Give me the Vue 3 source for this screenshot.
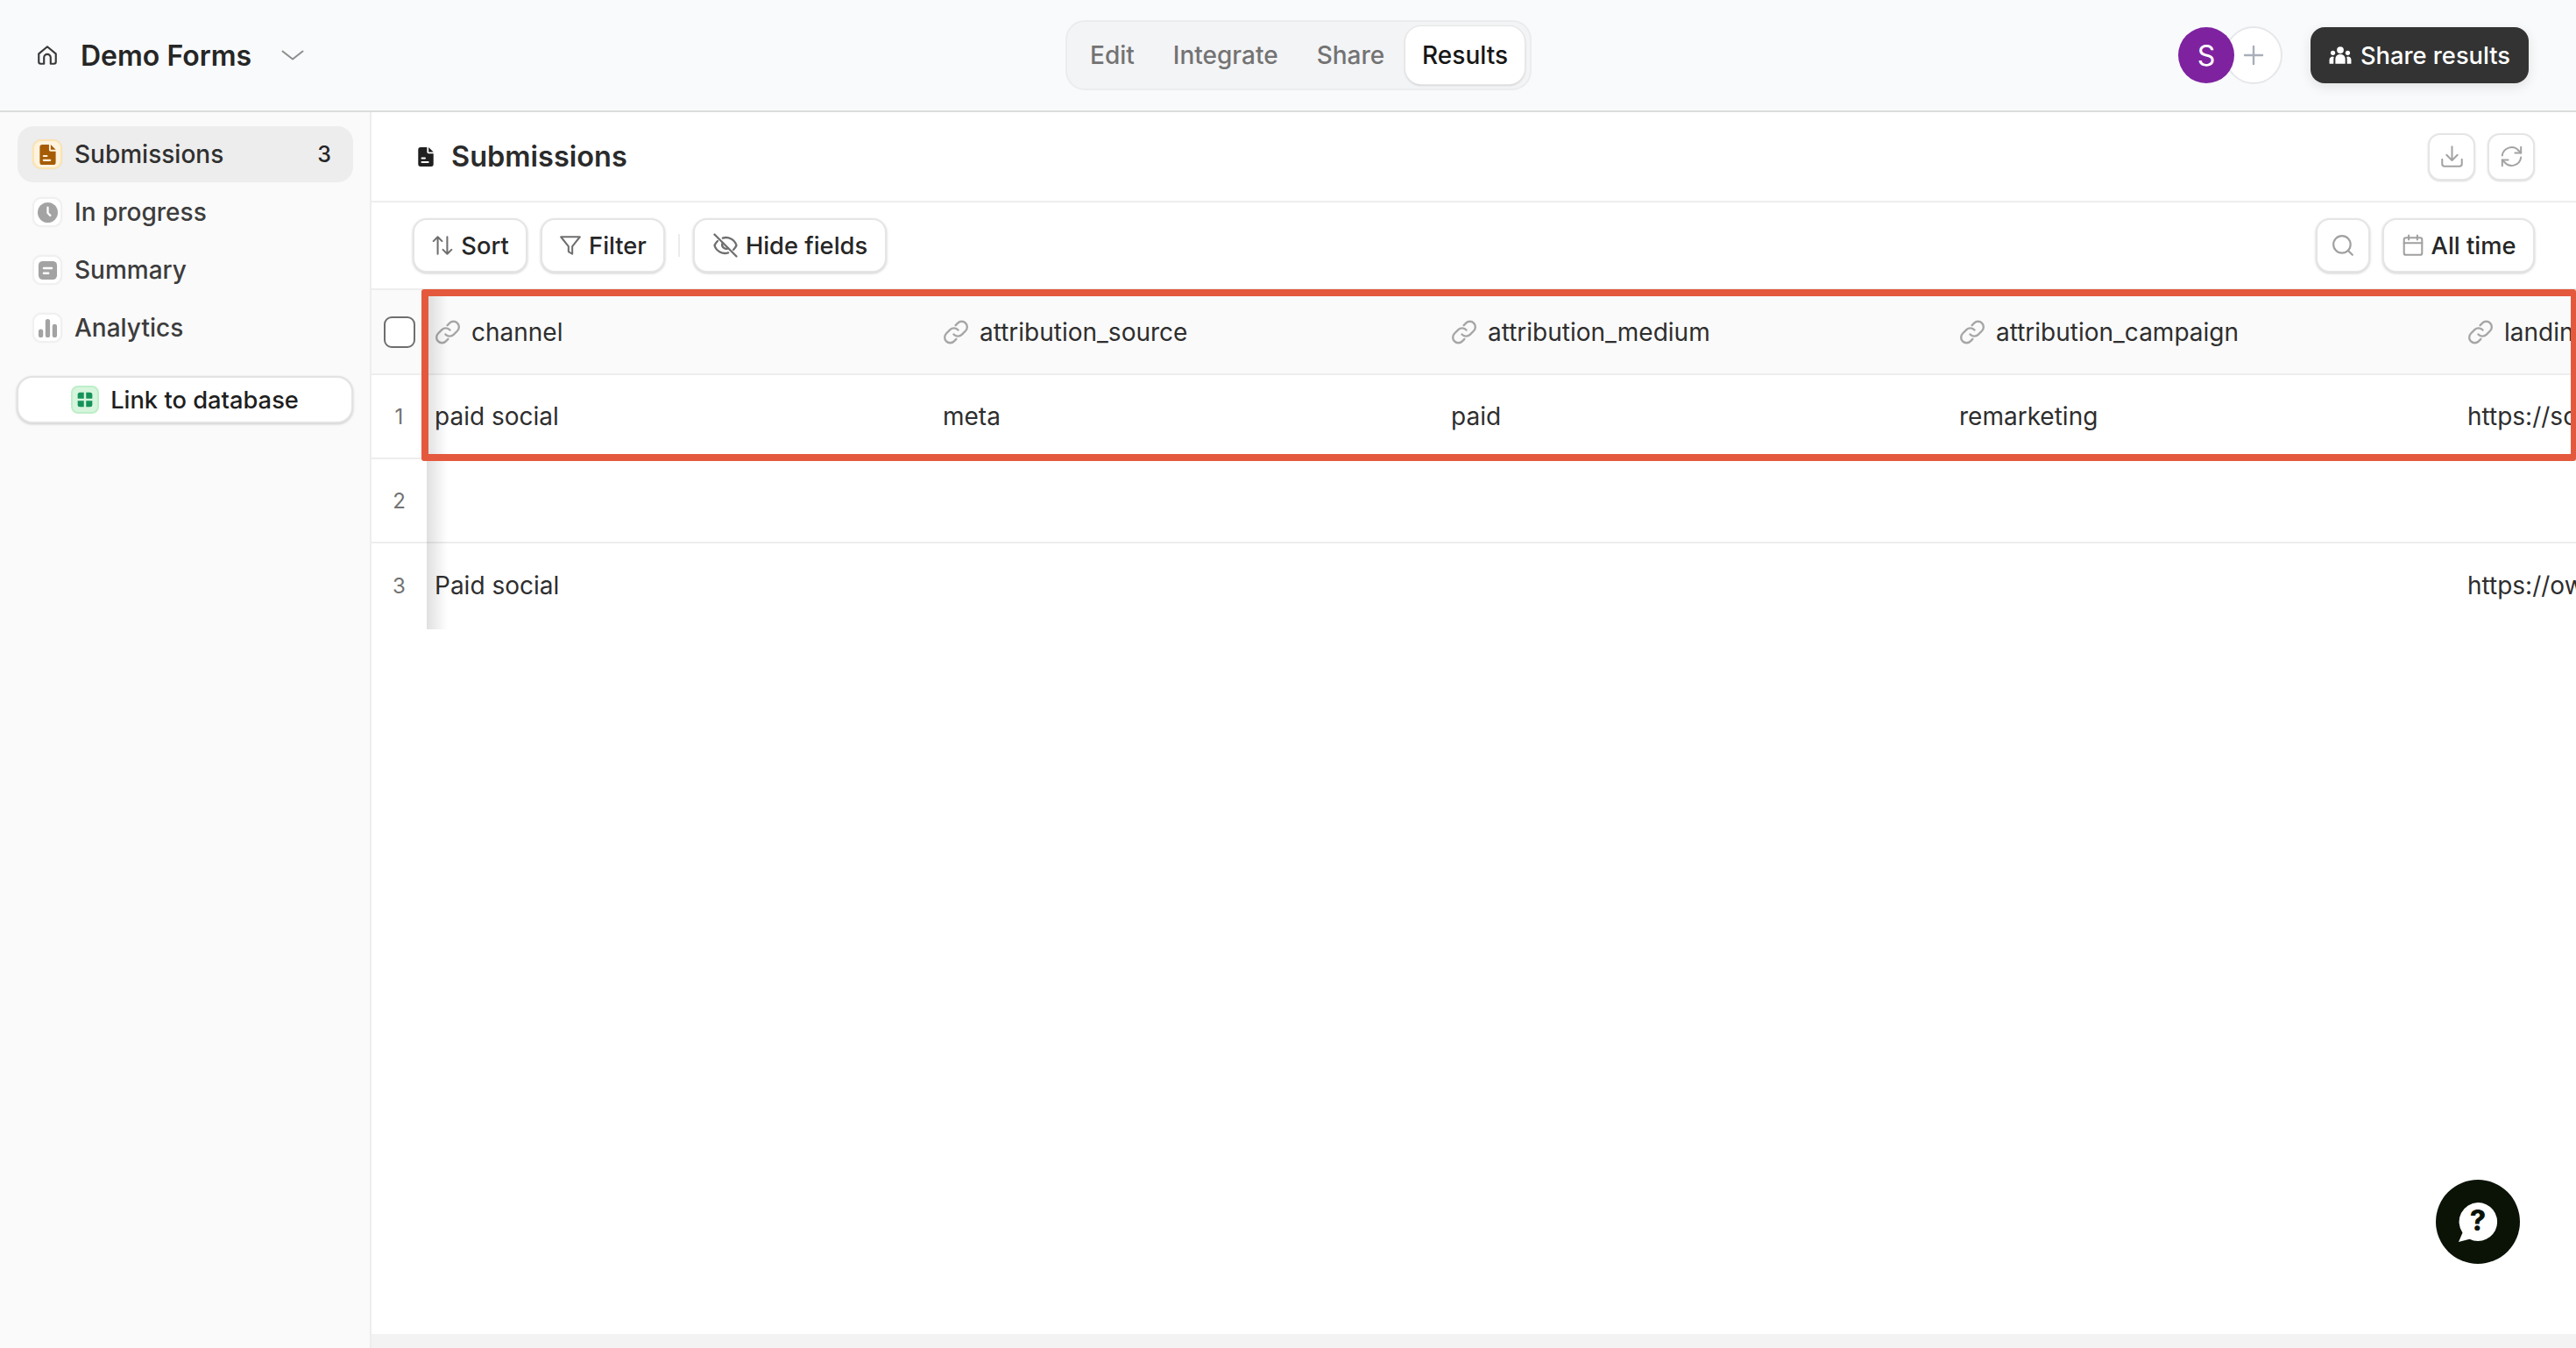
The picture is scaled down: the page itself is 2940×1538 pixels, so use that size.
<script setup>
const navItems = [
  { label: "In progress", icon: "clock" },
  { label: "Summary", icon: "summary" },
  { label: "Analytics", icon: "bars" },
]

const tabs = ["Edit", "Integrate", "Share"]

const columns = ["channel", "attribution_source", "attribution_medium", "attribution_campaign", "landing_page"]

const rows = [
  { id: 1, cells: ["paid social", "meta", "paid", "remarketing", "https://social.example.com/landing"] },
  { id: 2, cells: ["", "", "", "", ""] },
  { id: 3, cells: ["Paid social", "", "", "", "https://owned.example.com/landing"] },
]
</script>

<template>
  <div class="app">
    <header class="topbar">
      <div class="topbar__left">
        <svg class="home" viewBox="0 0 24 24" fill="none" stroke="#3a3a3a" stroke-width="2" stroke-linecap="round" stroke-linejoin="round">
          <path d="M3 10.5 12 3l9 7.5V19a2 2 0 0 1-2 2h-3.5v-6.5a3.5 3.5 0 0 0-7 0V21H5a2 2 0 0 1-2-2z" />
        </svg>
        <span class="form-name">Demo Forms</span>
        <svg class="chevron" viewBox="0 0 26 12" fill="none" stroke="#8d8d8d" stroke-width="2" stroke-linecap="round" stroke-linejoin="round">
          <path d="M1.5 1.5 13 10.5 24.5 1.5" />
        </svg>
      </div>

      <nav class="tabs">
        <span v-for="tab in tabs" :key="tab" class="tabs__item">{{ tab }}</span>
        <span class="tabs__item tabs__item--active">Results</span>
      </nav>

      <div class="topbar__right">
        <div class="avatars">
          <span class="avatar">S</span>
          <span class="avatar-add">
            <svg viewBox="0 0 24 24" fill="none" stroke="#a9aeb9" stroke-width="2.4" stroke-linecap="round">
              <path d="M12 2v20M2 12h20" />
            </svg>
          </span>
        </div>
        <button class="share-btn">
          <svg viewBox="0 0 24 24" fill="#fff">
            <circle cx="12" cy="6.5" r="3.6" />
            <circle cx="4.2" cy="9.5" r="2.4" />
            <circle cx="19.8" cy="9.5" r="2.4" />
            <path d="M6.8 21v-5.2a5.2 5 0 0 1 10.4 0V21z" />
            <path d="M0.5 21v-4.5a3.2 3.2 0 0 1 4.8-2.6 8 8 0 0 0-.4 2.2V21z" />
            <path d="M23.5 21v-4.5a3.2 3.2 0 0 0-4.8-2.6 8 8 0 0 1 .4 2.2V21z" />
          </svg>
          Share results
        </button>
      </div>
    </header>

    <div class="body">
      <aside class="sidebar">
        <div class="nav-item nav-item--active">
          <span class="nav-icon nav-icon--amber">
            <svg viewBox="0 0 24 24" fill="#a65c04">
              <path d="M5.5 0h8v6a2 2 0 0 0 2 2h6v13a3 3 0 0 1-3 3h-13a3 3 0 0 1-3-3V3a3 3 0 0 1 3-3z" />
              <path d="M15.5 0l6 6h-6z" />
              <rect x="6" y="12.5" width="6" height="2.2" rx="1.1" fill="#fdf3df" />
              <rect x="6" y="17.5" width="10" height="2.2" rx="1.1" fill="#fdf3df" />
            </svg>
          </span>
          <span class="nav-item__label">Submissions</span>
          <span class="nav-item__count">3</span>
        </div>

        <div v-for="item in navItems" :key="item.label" class="nav-item">
          <span class="nav-icon">
            <svg v-if="item.icon === 'clock'" viewBox="0 0 24 24">
              <circle cx="12" cy="12" r="12" fill="#a3a3a3" />
              <path d="M12 6v6.5l3 3" fill="none" stroke="#fff" stroke-width="2.4" stroke-linecap="round" stroke-linejoin="round" />
            </svg>
            <svg v-else-if="item.icon === 'summary'" viewBox="0 0 24 24">
              <rect x="1" y="1" width="22" height="22" rx="5" fill="#a3a3a3" />
              <rect x="6" y="8" width="12" height="2.6" rx="1.3" fill="#fff" />
              <rect x="6" y="14" width="8" height="2.6" rx="1.3" fill="#fff" />
            </svg>
            <svg v-else viewBox="0 0 24 24" fill="#a3a3a3">
              <rect x="1" y="13" width="5.5" height="10" rx="2.7" />
              <rect x="9.2" y="1" width="5.5" height="22" rx="2.7" />
              <rect x="17.5" y="7" width="5.5" height="16" rx="2.7" />
            </svg>
          </span>
          <span class="nav-item__label">{{ item.label }}</span>
        </div>

        <button class="link-db">
          <span class="link-db__icon">
            <svg viewBox="0 0 24 24" fill="#15925a">
              <path d="M5 2h5.5v8.5H2V5a3 3 0 0 1 3-3z" />
              <path d="M13.5 2H19a3 3 0 0 1 3 3v5.5h-8.5z" />
              <path d="M2 13.5h8.5V22H5a3 3 0 0 1-3-3z" />
              <path d="M13.5 13.5H22V19a3 3 0 0 1-3 3h-5.5z" />
            </svg>
          </span>
          Link to database
        </button>
      </aside>

      <main class="content">
        <div class="title-row">
          <div class="title">
            <svg viewBox="0 0 24 24" fill="#1f1f1f">
              <path d="M5.5 0h8v6a2 2 0 0 0 2 2h6v13a3 3 0 0 1-3 3h-13a3 3 0 0 1-3-3V3a3 3 0 0 1 3-3z" />
              <path d="M15.5 0l6 6h-6z" />
              <rect x="6" y="12.5" width="6" height="2.2" rx="1.1" fill="#fff" />
              <rect x="6" y="17.5" width="10" height="2.2" rx="1.1" fill="#fff" />
            </svg>
            Submissions
          </div>
          <div class="title-actions">
            <button class="icon-btn">
              <svg viewBox="0 0 24 24" fill="none" stroke="#a3a3a3" stroke-width="1.8" stroke-linecap="round" stroke-linejoin="round">
                <path d="M12 2v14M6.5 10.5 12 16l5.500-5.500" />
                <path d="M2 15v4.500A2.500 2.500 0 0 0 4.500 22h15a2.500 2.500 0 0 0 2.500-2.500V15" />
              </svg>
            </button>
            <button class="icon-btn">
              <svg viewBox="0 0 24 24" fill="none" stroke="#a3a3a3" stroke-width="1.8" stroke-linecap="round" stroke-linejoin="round">
                <path d="M2.500 11A9.500 9.500 0 0 1 19 6l2.500 2.500" />
                <path d="M21.500 2.500v6h-6" />
                <path d="M21.500 13A9.500 9.500 0 0 1 5 18l-2.500-2.500" />
                <path d="M2.500 21.500v-6h6" />
              </svg>
            </button>
          </div>
        </div>

        <div class="toolbar">
          <button class="tool-btn tool-btn--sort">
            <svg viewBox="0 0 24 24" fill="none" stroke="#6f6f6f" stroke-width="1.9" stroke-linecap="round" stroke-linejoin="round">
              <path d="M7 21V3M2.500 7.500 7 3l4.500 4.500" />
              <path d="M17 3v18M12.500 16.500 17 21l4.500-4.500" />
            </svg>
            Sort
          </button>
          <button class="tool-btn tool-btn--filter">
            <svg viewBox="0 0 24 24" fill="none" stroke="#6f6f6f" stroke-width="1.9" stroke-linecap="round" stroke-linejoin="round">
              <path d="M2 3h20l-8 10v8l-4-2.500V13z" />
            </svg>
            Filter
          </button>
          <span class="toolbar__sep"></span>
          <button class="tool-btn tool-btn--hide">
            <svg viewBox="0 0 24 24" fill="none" stroke="#6f6f6f" stroke-width="1.9" stroke-linecap="round" stroke-linejoin="round">
              <path d="M2 2l20 20" />
              <path d="M9.500 5.300A10 10 0 0 1 22 12a13 13 0 0 1-2.800 4M14.500 18.700A10 10 0 0 1 2 12a13 13 0 0 1 2.800-4" />
              <path d="M9.500 9.700a3.500 3.500 0 0 0 4.800 4.800" />
            </svg>
            Hide fields
          </button>
          <button class="tool-btn tool-btn--search">
            <svg viewBox="0 0 24 24" fill="none" stroke="#a0a0a0" stroke-width="2" stroke-linecap="round">
              <circle cx="11" cy="11" r="9" />
              <path d="M18 18l4 4" />
            </svg>
          </button>
          <button class="tool-btn tool-btn--time">
            <svg viewBox="0 0 24 24" fill="none" stroke="#a0a0a0" stroke-width="1.9" stroke-linecap="round" stroke-linejoin="round">
              <rect x="2.500" y="4" width="19" height="18" rx="2" />
              <path d="M2.500 9.500h19M7.500 1.500V6M16.500 1.500V6" />
            </svg>
            All time
          </button>
        </div>

        <div class="table">
          <div class="table__row table__row--head">
            <div class="table__index">
              <span class="checkbox"></span>
            </div>
            <div v-for="col in columns" :key="col" class="table__cell">
              <svg class="link-icon" viewBox="0 0 24 24" fill="none" stroke="#a6a6a6" stroke-width="1.9" stroke-linecap="round" stroke-linejoin="round">
                <path d="M10 14a5 5 0 0 0 7.300.3l3.500-3.500a5 5 0 0 0-7.100-7.100l-2 2" />
                <path d="M14 10a5 5 0 0 0-7.300-.3l-3.500 3.500a5 5 0 0 0 7.100 7.100l2-2" />
              </svg>
              {{ col }}
            </div>
          </div>
          <div v-for="row in rows" :key="row.id" class="table__row">
            <div class="table__index">{{ row.id }}</div>
            <div v-for="(cell, i) in row.cells" :key="i" class="table__cell">{{ cell }}</div>
          </div>
        </div>

        <div class="scroll-strip"></div>
      </main>
    </div>

    <!-- annotation box drawn over the table -->
    <div class="highlight"></div>

    <button class="help">
      <svg viewBox="0 0 48 48">
        <path d="M24 2a22 22 0 1 1-9.500 41.800L2 47l4.500-10.500A22 22 0 0 1 24 2z" fill="#fff" />
        <text x="24" y="34" text-anchor="middle" class="help__mark">?</text>
      </svg>
    </button>
  </div>
</template>

<style scoped>
.app {
  position: relative;
  display: flex;
  flex-direction: column;
  width: 2940px;
  height: 1538px;
  overflow: hidden;
  font-family: Inter, "Liberation Sans", sans-serif;
  color: #262626;
  background: #fff;
}

button {
  font-family: inherit;
  cursor: pointer;
}

.topbar {
  display: flex;
  align-items: center;
  flex: 0 0 128px;
  box-sizing: border-box;
  padding-right: 54px;
  background: #f9fafb;
  border-bottom: 2px solid #dcdcdc;
}

.topbar__left {
  display: flex;
  align-items: center;
  flex: 0 0 1216px;
  box-sizing: border-box;
  padding-left: 41px;
}

.home {
  width: 26px;
  height: 26px;
}

.form-name {
  margin-left: 25px;
  font-size: 32px;
  font-weight: 600;
  color: #262626;
}

.chevron {
  width: 26px;
  height: 12px;
  margin-left: 34px;
}

.tabs {
  display: flex;
  align-items: center;
  box-sizing: border-box;
  width: 532px;
  height: 80px;
  padding: 0 6px 0 26px;
  background: #f3f4f6;
  border: 2px solid #ebecee;
  border-radius: 22px;
}

.tabs__item {
  margin-right: 44px;
  font-size: 28px;
  font-weight: 500;
  color: #737373;
}

.tabs__item--active {
  display: flex;
  align-items: center;
  justify-content: center;
  width: 138px;
  height: 66px;
  margin-left: -20px;
  margin-right: 0;
  background: #fff;
  border-radius: 18px;
  color: #171717;
  box-shadow: 0 0 0 1px #e5e5e5, 0 1px 3px rgba(0, 0, 0, 0.25);
}

.topbar__right {
  display: flex;
  align-items: center;
  margin-left: auto;
}

.avatars {
  display: flex;
  align-items: center;
}

.avatar {
  position: relative;
  z-index: 1;
  display: flex;
  align-items: center;
  justify-content: center;
  width: 64px;
  height: 64px;
  border-radius: 50%;
  background: #7e22a0;
  color: #fff;
  font-size: 32px;
}

.avatar-add {
  display: flex;
  align-items: center;
  justify-content: center;
  box-sizing: border-box;
  width: 66px;
  height: 66px;
  margin-left: -11px;
  border: 2px solid #e6e7eb;
  border-radius: 50%;
  background: #fff;
}

.avatar-add svg {
  width: 24px;
  height: 24px;
}

.share-btn {
  display: flex;
  align-items: center;
  gap: 10px;
  justify-content: center;
  width: 249px;
  height: 64px;
  margin-left: 32px;
  border: 0;
  border-radius: 16px;
  background: #333;
  color: #fff;
  font-size: 27.3px;
  font-weight: 500;
  box-shadow: 0 4px 14px rgba(0, 0, 0, 0.1);
}

.share-btn svg {
  width: 26px;
  height: 26px;
}

.body {
  display: flex;
  flex: 1;
  min-height: 0;
}

.sidebar {
  display: flex;
  flex-direction: column;
  flex: 0 0 424px;
  box-sizing: border-box;
  padding: 16px 19px 0 20px;
  background: #fafafa;
  border-right: 2px solid #ededed;
}

.nav-item {
  display: flex;
  align-items: center;
  height: 64px;
  margin-bottom: 2px;
  padding: 0 17px;
  border-radius: 18px;
  font-size: 28px;
  font-weight: 500;
  color: #3d3d3d;
}

.nav-item--active {
  background: #ededed;
  color: #303030;
}

.nav-icon {
  display: flex;
  align-items: center;
  justify-content: center;
  box-sizing: border-box;
  width: 34px;
  height: 34px;
  margin-right: 14px;
  background: #fff;
  border: 2px solid #f0f0f0;
  border-radius: 10px;
  box-shadow: 0 0 2px rgba(0, 0, 0, 0.06);
}

.nav-icon svg {
  width: 23px;
  height: 23px;
}

.nav-icon--amber {
  background: #fdf3df;
  border: 2px solid #fce3ae;
}

.nav-item__label {
  flex: 1;
}

.nav-item__count {
  font-size: 25px;
  margin-right: 8px;
  color: #262626;
}

.link-db {
  display: flex;
  align-items: center;
  justify-content: center;
  gap: 13px;
  width: 384px;
  height: 54px;
  margin: 21px 0 0 -1px;
  padding: 0;
  border: 2px solid #e3e3e3;
  border-radius: 18px;
  background: #fff;
  color: #1f1f1f;
  font-size: 27.3px;
  font-weight: 500;
  box-shadow: 0 1px 3px rgba(0, 0, 0, 0.2);
}

.link-db__icon {
  display: flex;
  align-items: center;
  justify-content: center;
  box-sizing: border-box;
  width: 32px;
  height: 32px;
  background: #d6f5dc;
  border: 2px solid #bdeec9;
  border-radius: 8px;
}

.link-db__icon svg {
  width: 20px;
  height: 20px;
}

.content {
  display: flex;
  flex-direction: column;
  flex: 1;
  min-width: 0;
}

.title-row {
  display: flex;
  align-items: center;
  justify-content: space-between;
  flex: 0 0 103px;
  box-sizing: border-box;
  padding: 0 47px 0 51px;
  border-bottom: 2px solid #ededed;
}

.title {
  display: flex;
  align-items: center;
  gap: 18px;
  font-size: 32.5px;
  font-weight: 600;
  color: #2b2b2b;
}

.title svg {
  width: 22px;
  height: 26px;
}

.title-actions {
  display: flex;
  gap: 14px;
}

.icon-btn {
  display: flex;
  align-items: center;
  justify-content: center;
  width: 54px;
  height: 54px;
  padding: 0;
  background: #fff;
  border: 2px solid #e5e5e5;
  border-radius: 14px;
  box-shadow: 0 1px 2px rgba(0, 0, 0, 0.15);
}

.icon-btn svg {
  width: 27px;
  height: 27px;
}

.toolbar {
  display: flex;
  align-items: center;
  flex: 0 0 100px;
  box-sizing: border-box;
  padding: 0 47px 0 47px;
  border-bottom: 2px solid #ededed;
}

.tool-btn {
  display: flex;
  align-items: center;
  justify-content: center;
  gap: 8px;
  height: 62px;
  padding: 0;
  background: #fff;
  border: 2px solid #e5e5e5;
  border-radius: 16px;
  color: #262626;
  font-size: 27.3px;
  font-weight: 500;
  box-shadow: 0 1px 3px rgba(0, 0, 0, 0.2);
}

.tool-btn svg {
  width: 26px;
  height: 26px;
  flex-shrink: 0;
}

.tool-btn--hide svg {
  width: 30px;
  height: 30px;
}

.tool-btn--sort {
  width: 131px;
}

.tool-btn--filter {
  width: 142px;
  margin-left: 15px;
}

.toolbar__sep {
  width: 2px;
  height: 26px;
  margin: 0 15px;
  background: #ececec;
}

.tool-btn--hide {
  width: 221px;
}

.tool-btn--search {
  width: 62px;
  margin-left: auto;
}

.tool-btn--time {
  width: 174px;
  margin-left: 14px;
}

.table {
  display: flex;
  flex-direction: column;
  flex: 1;
  min-height: 0;
  overflow: hidden;
}

.table__row {
  position: relative;
  display: flex;
  flex: 0 0 96px;
  box-sizing: border-box;
  border-bottom: 2px solid #ededed;
  font-size: 28px;
  color: #2e2e2e;
}

.table__row:last-child {
  border-bottom: 0;
}

.table__row--head {
  flex-basis: 97px;
  background: #fafafa;
}

.table__index {
  position: relative;
  display: flex;
  align-items: center;
  justify-content: center;
  flex: 0 0 63px;
  font-size: 24px;
  color: #737373;
}

/* soft shadow of the frozen column */
.table__index::after {
  content: "";
  position: absolute;
  top: 0;
  bottom: -2px;
  left: 100%;
  width: 24px;
  background: linear-gradient(90deg, rgba(0, 0, 0, 0.12), rgba(0, 0, 0, 0));
  pointer-events: none;
}

.checkbox {
  box-sizing: border-box;
  width: 36px;
  height: 36px;
  background: #fff;
  border: 2px solid #6e6e6e;
  border-radius: 9px;
}

.table__cell {
  display: flex;
  align-items: center;
  gap: 12px;
  flex: 0 0 580px;
  box-sizing: border-box;
  padding-left: 9px;
  white-space: nowrap;
}

.link-icon {
  width: 30px;
  height: 30px;
  flex-shrink: 0;
}

.scroll-strip {
  flex: 0 0 16px;
  background: #f3f3f3;
}

.highlight {
  position: absolute;
  top: 330px;
  left: 481px;
  right: 0;
  height: 196px;
  box-sizing: border-box;
  border: 8px solid #e4593d;
  border-right-width: 6px;
  border-radius: 3px;
  pointer-events: none;
}

.help {
  position: absolute;
  top: 1346px;
  left: 2780px;
  display: flex;
  align-items: center;
  justify-content: center;
  width: 96px;
  height: 96px;
  padding: 0;
  border: 0;
  border-radius: 50%;
  background: #0a1306;
}

.help svg {
  width: 48px;
  height: 48px;
}

.help__mark {
  font-family: Inter, "Liberation Sans", sans-serif;
  font-size: 32px;
  font-weight: 800;
  fill: #0a1306;
}
</style>

<style>
html,
body {
  margin: 0;
  background: #fff;
}
</style>
